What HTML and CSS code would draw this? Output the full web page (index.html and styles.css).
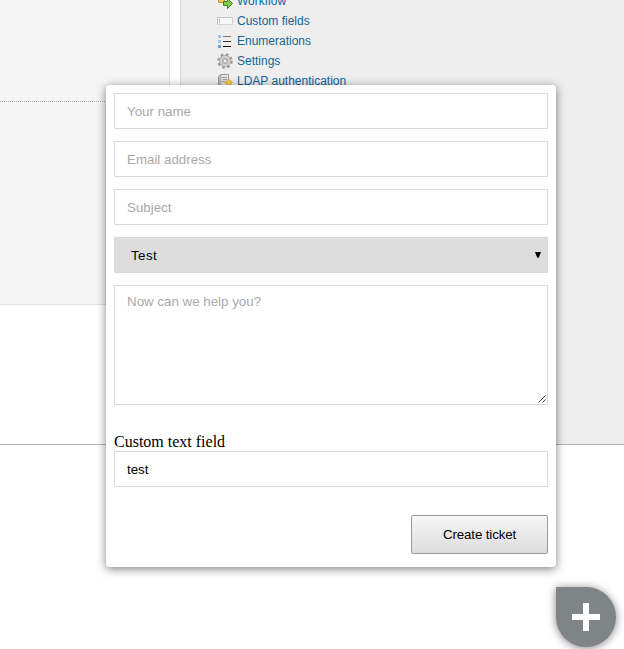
FILE: index.html
```
<!DOCTYPE html>
<html lang="en">
<head>
<meta charset="utf-8">
<title>Create ticket</title>
<link rel="stylesheet" href="styles.css">
</head>
<body>
<main class="page">
  <section class="content"><div class="content-head"></div></section>
  <aside class="sidebar">
    <ul class="menu">
      <li><svg width="16" height="16" viewBox="0 0 16 16"><path d="M1.500 0v9.500h6V0z" fill="#f6c65b" stroke="#d98e20"/><path d="M3 7l3-3M3 4l3 3" stroke="#fff3c4"/><path d="M6.500 8.500h4v-3l5 5-5 5v-3h-4z" fill="#82c94d" stroke="#3b8320"/></svg><a>Workflow</a></li>
      <li><svg width="16" height="16" viewBox="0 0 16 16"><path d="M.5 4.500h15v7H.5z" fill="#f8f8f8" stroke="#d4d4d4"/><path d="M.5 11.500v-7h15" fill="none" stroke="#c4c4c4"/><path d="M2.500 6v4" stroke="#bbb"/></svg><a>Custom fields</a></li>
      <li><svg width="16" height="16" viewBox="0 0 16 16"><path d="M1 2h3v3H1zM1 7h3v3H1z" fill="#a4c2ec"/><path d="M1 12h3v3H1z" fill="#7399d9"/><path d="M6 3.500h8" stroke="#777"/><path d="M6 8.500h8" stroke="#333"/><path d="M6 13.500h8" stroke="#000"/></svg><a>Enumerations</a></li>
      <li><svg width="16" height="16" viewBox="0 0 16 16"><circle cx="8" cy="8" r="6.500" fill="none" stroke="#999" stroke-width="2.600" stroke-dasharray="2.553 2.552"/><circle cx="8" cy="8" r="4.100" fill="none" stroke="#999" stroke-width="3.800"/><circle cx="8" cy="8" r="4.100" fill="none" stroke="#cfcfcf" stroke-width="2.600"/><circle cx="8" cy="8" r="2" fill="#eee" stroke="#999" stroke-width=".7"/></svg><a>Settings</a></li>
      <li><svg width="16" height="16" viewBox="0 0 16 16"><path d="M1.500 15V3.500l2-2h8V15z" fill="#b8b8b8" stroke="#999"/><path d="M4.500 2h6.500v13H4.500z" fill="#e5e5e5"/><path d="M5 4.500h5M6 6.500h4M5 8.500h3" stroke="#999"/><path d="M8 9.500l3.500-3.500 4 3.500-4 4z" fill="#f4cd54" stroke="#d9a840"/></svg><a>LDAP authentication</a></li>
    </ul>
  </aside>
</main>
<form class="dialog">
  <input class="field" type="text" placeholder="Your name">
  <input class="field" type="text" placeholder="Email address">
  <input class="field" type="text" placeholder="Subject">
  <div class="select-wrap">
    <select class="field select"><option>Test</option></select>
    <svg class="arrow" width="6" height="6" viewBox="0 0 6 6"><path d="M0 0h6L3.700 5.800H2.300z"/></svg>
  </div>
  <div class="area-wrap">
    <textarea class="field area" placeholder="Now can we help you?"></textarea>
    <svg class="grip" width="8" height="8" viewBox="0 0 8 8"><path d="M.5 7.500l7-7M4.500 7.500l3-3" stroke="#444" fill="none"/></svg>
  </div>
  <label class="label" for="custom">Custom text field</label>
  <input class="field" id="custom" type="text" value="test">
  <button class="submit" type="button">Create ticket</button>
</form>
<button class="fab" type="button" aria-label="New ticket"><svg width="28" height="28" viewBox="0 0 28 28"><path d="M0 11h11V0h6v11h11v6H17v11h-6V17H0z" fill="#fff"/></svg></button>
</body>
</html>
```
FILE: styles.css
```
* { box-sizing: border-box; }
body {
  margin: 0;
  height: 649px;
  overflow: hidden;
  background: #fff;
  font-family: "Liberation Sans", Arial, sans-serif;
}
.page {
  display: flex;
  align-items: flex-start;
  gap: 10px;
  height: 445px;
  border-bottom: 1px solid #b5b5b5;
  overflow: hidden;
}
.content {
  width: 170px;
  height: 305px;
  background: #f5f5f5;
  border: solid #dfdfdf;
  border-width: 0 1px 1px 0;
}
.content-head { height: 102px; border-bottom: 1px dotted #b0b0b0; }
.sidebar {
  flex: 1;
  height: 444px;
  padding-left: 36px;
  background: #eee;
  border-left: 1px solid #d7d7d7;
}
.menu { list-style: none; margin: -9px 0 0; padding: 0; }
.menu li {
  display: flex;
  align-items: center;
  gap: 4px;
  height: 20px;
  font-size: 12px;
  color: #116699;
}
.dialog {
  position: absolute;
  left: 106px;
  top: 85px;
  width: 450px;
  height: 482px;
  padding: 8px;
  display: flex;
  flex-direction: column;
  background: #fff;
  border-radius: 4px;
  box-shadow: 0 2px 10px rgba(0, 0, 0, .5);
}
.field {
  display: block;
  flex: none;
  width: 100%;
  height: 36px;
  margin: 0 0 12px;
  padding: 0 12px;
  border: 1px solid #d9d9d9;
  border-radius: 0;
  background: #fff;
  color: #000;
  font: 13.333px "Liberation Sans", Arial, sans-serif;
  outline: 0;
}
.field::placeholder { color: #a9a9a9; opacity: 1; }
.select-wrap, .area-wrap { position: relative; }
.select {
  appearance: none;
  padding: 0 16px;
  background: #dcdcdc;
  letter-spacing: .4px;
}
.arrow { position: absolute; right: 7px; top: 15px; }
.area { height: 120px; padding: 8px 12px; resize: none; margin-bottom: 27px; }
.grip { position: absolute; right: 2px; top: 110px; }
.label { height: 19px; font: 16px/19px "Liberation Serif", "Times New Roman", serif; }
.submit {
  align-self: flex-end;
  width: 137px;
  height: 39px;
  margin-top: 16px;
  padding: 0;
  border: 1px solid #999;
  border-radius: 2px;
  background: linear-gradient(#f6f6f6, #ddd);
  color: #000;
  font: 13.333px "Liberation Sans", Arial, sans-serif;
  letter-spacing: -.13px;
}
.fab {
  position: absolute;
  left: 556px;
  top: 587px;
  width: 60px;
  height: 60px;
  padding: 0;
  display: flex;
  align-items: center;
  justify-content: center;
  border: 0;
  border-radius: 0 30px 30px 30px;
  background: #7f8487;
  box-shadow: 0 1px 8px rgba(0, 0, 0, .5);
}
```
